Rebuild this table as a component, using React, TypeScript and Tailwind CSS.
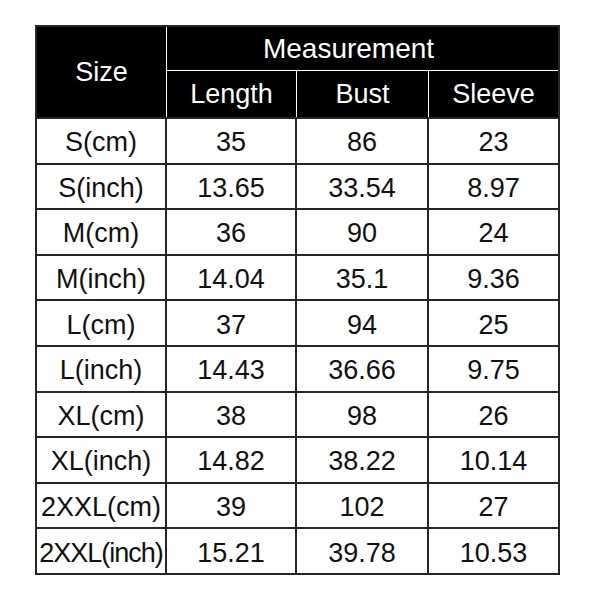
const rows: [string, string, string, string][] = [
  ["S(cm)", "35", "86", "23"],
  ["S(inch)", "13.65", "33.54", "8.97"],
  ["M(cm)", "36", "90", "24"],
  ["M(inch)", "14.04", "35.1", "9.36"],
  ["L(cm)", "37", "94", "25"],
  ["L(inch)", "14.43", "36.66", "9.75"],
  ["XL(cm)", "38", "98", "26"],
  ["XL(inch)", "14.82", "38.22", "10.14"],
  ["2XXL(cm)", "39", "102", "27"],
  ["2XXL(inch)", "15.21", "39.78", "10.53"],
];

export default function App() {
  return (
    <div className="w-[600px] h-[600px] bg-white pt-[25px] pl-[35px] font-['Liberation_Sans',Arial,sans-serif] text-[27px] leading-none">
      <div className="w-[525px] border-2 border-[#262626]">
        <div className="flex h-[90px] bg-black text-white">
          <div className="w-[130px] border-r border-white flex items-center justify-center">
            Size
          </div>
          <div className="flex-1 flex flex-col">
            {/* title sits a bit left of centre in the source */}
            <div className="h-[44px] border-b border-white flex items-center justify-center pr-[28px] text-[28px]">
              Measurement
            </div>
            <div className="flex-1 flex">
              <div className="w-[130px] border-r border-white flex items-center justify-center">
                Length
              </div>
              <div className="w-[132px] border-r border-white flex items-center justify-center">
                Bust
              </div>
              <div className="flex-1 flex items-center justify-center">Sleeve</div>
            </div>
          </div>
        </div>
        {rows.map((r) => (
          <div key={r[0]} className="flex h-[45.6px] border-t-2 border-[#262626] text-[#111]">
            <div
              className={`w-[130px] border-r-2 border-[#262626] flex items-center justify-center pt-[4px] ${
                r[0] === "2XXL(inch)" ? "tracking-[-1px]" : ""
              }`}
            >
              {r[0]}
            </div>
            <div className="w-[130px] border-r-2 border-[#262626] flex items-center justify-center pt-[4px]">
              {r[1]}
            </div>
            <div className="w-[132px] border-r-2 border-[#262626] flex items-center justify-center pt-[4px]">
              {r[2]}
            </div>
            <div className="flex-1 flex items-center justify-center pt-[4px]">{r[3]}</div>
          </div>
        ))}
      </div>
    </div>
  );
}
